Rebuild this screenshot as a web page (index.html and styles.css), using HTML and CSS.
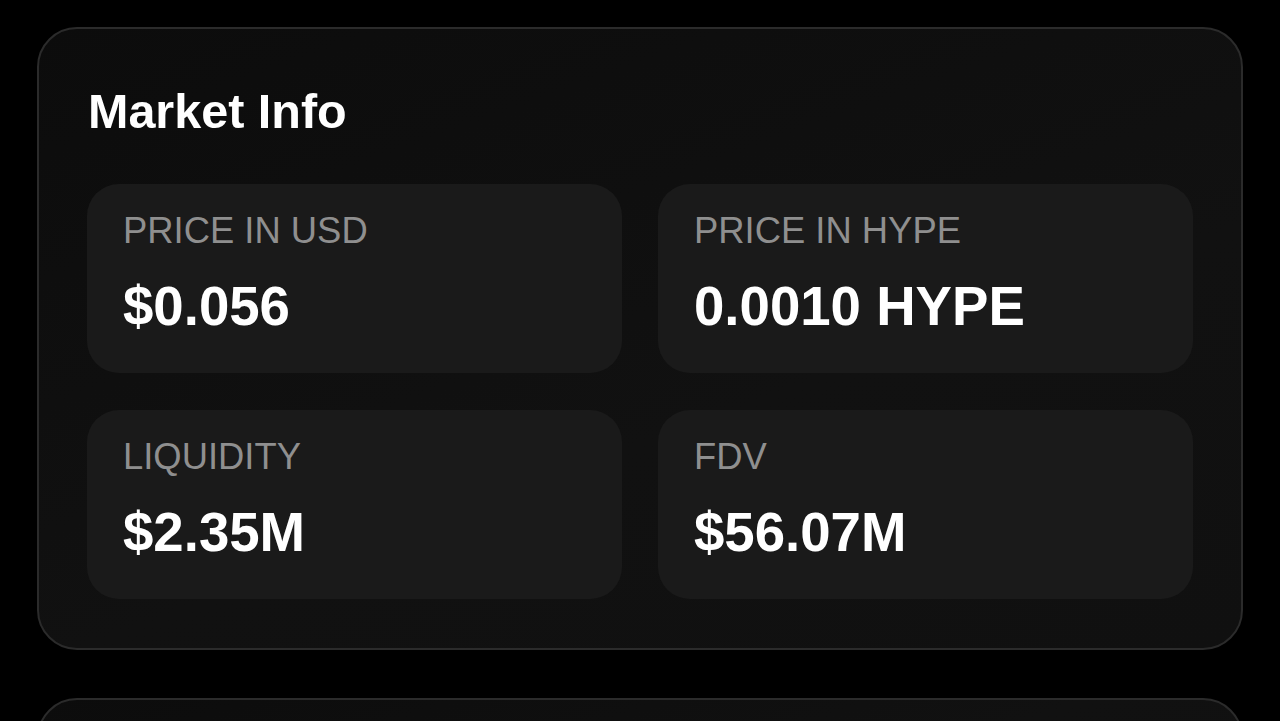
FILE: index.html
```html
<!DOCTYPE html>
<html lang="en">
<head>
<meta charset="utf-8">
<title>Market Info</title>
<link rel="stylesheet" href="styles.css">
</head>
<body>
<main class="page">
  <section class="card">
    <h2 class="card-title">Market Info</h2>
    <div class="stats">
      <div class="stat">
        <div class="stat-label">PRICE IN USD</div>
        <div class="stat-value">$0.056</div>
      </div>
      <div class="stat">
        <div class="stat-label">PRICE IN HYPE</div>
        <div class="stat-value">0.0010 HYPE</div>
      </div>
      <div class="stat">
        <div class="stat-label">LIQUIDITY</div>
        <div class="stat-value">$2.35M</div>
      </div>
      <div class="stat">
        <div class="stat-label">FDV</div>
        <div class="stat-value">$56.07M</div>
      </div>
    </div>
  </section>
  <section class="card card-next"></section>
</main>
</body>
</html>
```

FILE: styles.css
```css
* { box-sizing: border-box; }
html, body { margin: 0; height: 100%; }
body {
  background: #000;
  font-family: "Liberation Sans", Arial, sans-serif;
  color: #fff;
  overflow: hidden;
}
.page {
  padding: 27px 37px 0;
  display: flex;
  flex-direction: column;
  gap: 48px;
}
.card {
  width: 1206px;
  border: 2px solid #2b2b2b;
  border-radius: 40px;
  background: linear-gradient(160deg, #0c0c0c 0%, #111111 60%, #101010 100%);
  padding: 54px 48px 49px;
}
.card-next {
  height: 200px;
  flex-shrink: 0;
}
.card-title {
  margin: 0 0 45px;
  font-size: 48.5px;
  line-height: 56px;
  font-weight: 700;
  padding-left: 1px;
}
.stats {
  display: grid;
  grid-template-columns: 1fr 1fr;
  column-gap: 36px;
  row-gap: 37px;
}
.stat {
  background: #1a1a1a;
  border-radius: 32px;
  padding: 27px 36px 36px;
  height: 189px;
}
.stat-label {
  font-size: 36.4px;
  line-height: 40px;
  color: #8f8f8f;
}
.stat-value {
  margin-top: 26px;
  font-size: 54.6px;
  line-height: 60px;
  font-weight: 700;
}
```
